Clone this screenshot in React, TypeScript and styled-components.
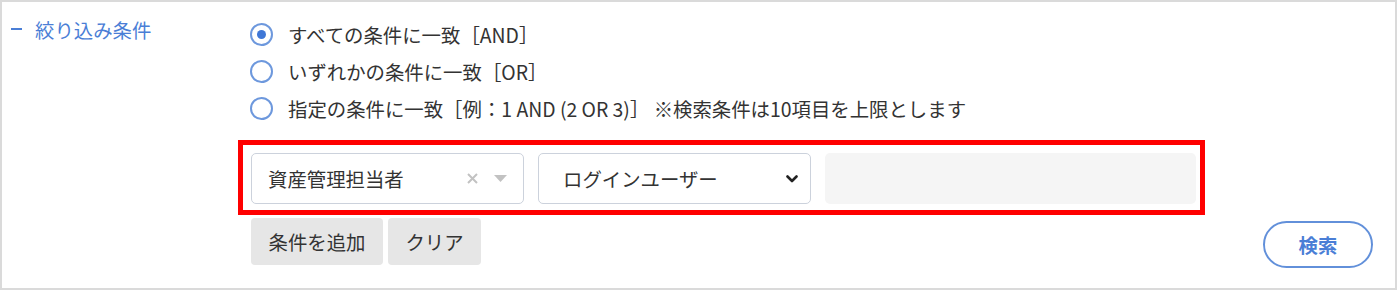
import React from "react";
import styled, { createGlobalStyle } from "styled-components";

const GlobalStyle = createGlobalStyle`
  html, body { margin: 0; padding: 0; background: #ffffff; }
  body {
    font-family: "Noto Sans CJK JP", "Noto Sans", sans-serif;
    color: #333333;
  }
  *, *::before, *::after { box-sizing: border-box; }
`;

const Panel = styled.section`
  width: 1397px;
  height: 290px;
  border: 2px solid #dadada;
  display: grid;
  grid-template-columns: 248px 1fr;
  background: #ffffff;
`;

const LabelCol = styled.div`
  padding: 13px 0 0 8px;
`;

const SectionLabel = styled.div`
  display: flex;
  align-items: center;
  height: 28px;
  font-size: 19.4px;
  color: #4a7ed6;
  gap: 13px;
`;

const Dash = styled.span`
  display: inline-block;
  width: 11px;
  height: 2px;
  background: #4a7ed6;
  margin-left: 1px;
`;

const ContentCol = styled.div`
  padding: 14px 22px 0 0;
  display: flex;
  flex-direction: column;
`;

const RadioGroup = styled.div`
  display: flex;
  flex-direction: column;
`;

const RadioRow = styled.label`
  display: flex;
  align-items: center;
  height: 37px;
  font-size: 19.4px;
  color: #333333;
  gap: 15px;
  white-space: pre;
`;

const RadioCircle = styled.span<{ $checked?: boolean }>`
  width: 23px;
  height: 23px;
  border-radius: 50%;
  border: 2px solid #6d98dd;
  display: flex;
  align-items: center;
  justify-content: center;
  flex-shrink: 0;
  &::after {
    content: "";
    width: 9px;
    height: 9px;
    border-radius: 50%;
    background: #3f77d6;
    display: ${(p) => (p.$checked ? "block" : "none")};
  }
`;

const ConditionRow = styled.div`
  position: relative;
  margin-top: 26px;
  margin-left: 1px;
  display: flex;
  gap: 14px;
  height: 51px;
  &::after {
    content: "";
    position: absolute;
    top: -13px;
    left: -13px;
    width: 967px;
    height: 75px;
    border: 5px solid #ff0000;
    pointer-events: none;
  }
`;

const SelectBox = styled.div<{ $pad: number }>`
  width: 273px;
  height: 51px;
  border: 1.5px solid #ccd2dc;
  border-radius: 5px;
  display: flex;
  align-items: center;
  padding: 0 ${(p) => (p.$pad === 24 ? 12 : 16)}px 0 ${(p) => p.$pad}px;
  font-size: 19.4px;
  color: #333333;
  background: #ffffff;
`;

const SelectText = styled.span`
  flex: 1;
  white-space: nowrap;
`;

const Indicators = styled.span`
  display: flex;
  align-items: center;
  gap: 15px;
`;

const ValueInput = styled.div`
  width: 371px;
  height: 51px;
  border-radius: 5px;
  background: #f5f5f5;
`;

const Footer = styled.div`
  margin-top: 14px;
  margin-left: 1px;
  display: flex;
  align-items: flex-start;
  justify-content: space-between;
`;

const ButtonGroup = styled.div`
  display: flex;
  gap: 5px;
`;

const GrayButton = styled.button`
  height: 47px;
  padding: 0 17.5px;
  border: none;
  border-radius: 4px;
  background: #e6e6e6;
  font-family: inherit;
  font-size: 19.4px;
  color: #333333;
`;

const SearchButton = styled.button`
  margin-top: 3px;
  width: 110px;
  height: 47px;
  border: 2px solid #6290da;
  border-radius: 24px;
  background: #ffffff;
  font-family: inherit;
  font-size: 19.4px;
  font-weight: 700;
  color: #4a7ed6;
`;

const ClearIcon = () => (
  <svg width="13" height="13" viewBox="0 0 13 13">
    <path d="M2 2 L11 11 M11 2 L2 11" stroke="#c2c2c2" strokeWidth="2" fill="none" />
  </svg>
);

const CaretIcon = () => (
  <svg width="13" height="7" viewBox="0 0 13 7">
    <path d="M0 0 L13 0 L6.5 7 Z" fill="#c2c2c2" />
  </svg>
);

const ChevronIcon = () => (
  <svg width="12" height="8" viewBox="0 0 12 8">
    <path d="M1.5 1.5 L6 6 L10.5 1.5" stroke="#222222" strokeWidth="2.6" fill="none" strokeLinecap="round" strokeLinejoin="round" />
  </svg>
);

const options = [
  { label: "すべての条件に一致［AND］", checked: true },
  { label: "いずれかの条件に一致［OR］", checked: false },
  { label: "指定の条件に一致［例：1 AND (2 OR 3)］ ※検索条件は10項目を上限とします", checked: false },
];

export default function App() {
  return (
    <>
      <GlobalStyle />
      <Panel>
        <LabelCol>
          <SectionLabel>
            <Dash />
            <span>絞り込み条件</span>
          </SectionLabel>
        </LabelCol>
        <ContentCol>
          <RadioGroup>
            {options.map((o) => (
              <RadioRow key={o.label}>
                <RadioCircle $checked={o.checked} />
                <span>{o.label}</span>
              </RadioRow>
            ))}
          </RadioGroup>
          <ConditionRow>
            <SelectBox $pad={16}>
              <SelectText>資産管理担当者</SelectText>
              <Indicators>
                <ClearIcon />
                <CaretIcon />
              </Indicators>
            </SelectBox>
            <SelectBox $pad={24}>
              <SelectText>ログインユーザー</SelectText>
              <ChevronIcon />
            </SelectBox>
            <ValueInput />
          </ConditionRow>
          <Footer>
            <ButtonGroup>
              <GrayButton>条件を追加</GrayButton>
              <GrayButton>クリア</GrayButton>
            </ButtonGroup>
            <SearchButton>検索</SearchButton>
          </Footer>
        </ContentCol>
      </Panel>
    </>
  );
}
